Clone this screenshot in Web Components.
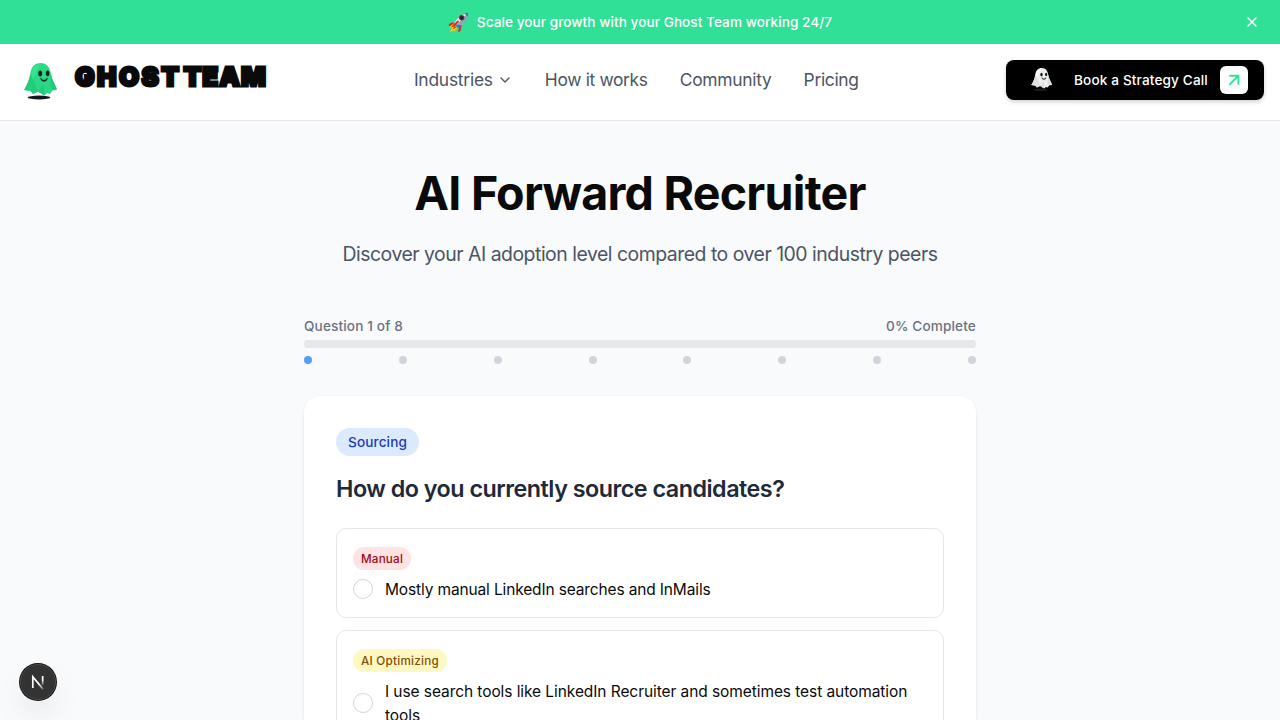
<!DOCTYPE html>
<html lang="en">
<head>
<meta charset="utf-8">
<title>AI Forward Recruiter</title>
<style>
body{margin:0;height:720px;overflow:hidden;background:#f9fafb;color:#0a0a0a;font-family:Inter,"Open Sans",sans-serif}
</style>
</head>
<body>
<ghost-app></ghost-app>
<script>
const define=(name,html)=>{
  const t=document.createElement('template');t.innerHTML=html;
  customElements.define(name,class extends HTMLElement{
    constructor(){super();this.attachShadow({mode:'open'}).append(t.content.cloneNode(true));}
  });
};

define('promo-banner',`<style>
:host{display:grid;grid-template-columns:1fr auto 1fr;align-items:center;height:44px;background:#30e097;color:#fff;font-size:13.6px;line-height:20px;font-weight:500;letter-spacing:.05px}
.msg{grid-column:2;display:flex;align-items:center;gap:8px}
.msg svg{display:block}
.close{justify-self:end;margin-right:20px;display:block}
</style>
<div class="msg"><svg width="21" height="21" viewBox="0 0 21 21">
<path d="M5 10 0.8 12.2 1 14 6 13Z" fill="#d92e18"/><path d="M11 15 10 20.5 12.5 19 14 12Z" fill="#d92e18"/>
<path d="M5 12 1 15.5 4.5 15.5 1.3 20.3 6 18 5.5 20 9.5 16Z" fill="#ffcf24"/><path d="M5.5 12 3 15 5.8 15 4.5 17.5 9 15.5Z" fill="#f04a16"/>
<path d="M6 11Q9 2.5 20 .7 20.6 9 10.5 16L7.5 15.2Z" fill="#8fa5b9"/>
<path d="M6.4 11Q10 4 19.5 1L9 12.5Z" fill="#e7edf4"/><path d="M16.5 1.5 20 .7 19.7 4.5Z" fill="#5a6883"/>
<path d="M6 11 10.5 16 13.8 13.2 9 13Z" fill="#3171b8"/>
<path d="M10.5 9 6 13.5" stroke="#d62d20" stroke-width="1.8"/><circle cx="13.7" cy="5.7" r="2.7" fill="#882b2b"/><circle cx="13.7" cy="5.7" r="1.7" fill="#17242f"/>
</svg><span>Scale your growth with your Ghost Team working 24/7</span></div>
<svg class="close" width="16" height="16" viewBox="0 0 24 24" fill="none" stroke="#fff" stroke-width="2.2" stroke-linecap="round"><path d="M18 6 6 18M6 6l12 12"/></svg>`);

define('ghost-mark',`<style>
:host{display:block;width:34px;height:38px}svg{display:block;width:100%;height:100%}
</style>
<svg viewBox="0 0 34 38">
<ellipse cx="15" cy="34.5" rx="11.4" ry="1.9" style="fill:var(--shadow,#101820)"/>
<path d="M16.5 0C23 0 26 4.5 27 11 28 18 32 22 32.8 27L28.5 27.2 26 31 23 30 20.5 32.5 14 28.5 9 31 6.5 28 .1 27C3 22 5.5 17 6.3 10.5 7.2 4 11 0 16.5 0Z" style="fill:var(--body,#2bd985)"/>
<path d="M6.3 10.5 9.5 17 5.5 27.7.1 27C3 22 5.5 17 6.3 10.5ZM9.5 17 14 28.5 9 31 6.5 28ZM27 11 26 23 28.5 27.2 32.8 27C32 22 28 18 27 11ZM20 21 20.5 32.5 14 28.5Z" style="fill:var(--fold,#22cb7a)"/>
<path d="M10 4 16 1 13 8 9 16 7 10Z" style="fill:var(--light,#3ae293)"/>
<ellipse cx="16.2" cy="10.4" rx="1.9" ry="3" fill="#10231e"/><ellipse cx="23.6" cy="10.3" rx="1.8" ry="2.9" fill="#10231e"/>
<path d="M16.5 15.2Q20 19.5 23.4 15.2 23 18.3 20 18.3 17.2 18.3 16.5 15.2Z" fill="#10231e" stroke="#10231e" stroke-width=".6"/>
</svg>`);

define('site-header',`<style>
:host{display:grid;grid-template-columns:1fr auto 1fr;align-items:start;height:60px;padding:16px 16px 0 24px;background:#fff;border-bottom:1px solid #e5e7eb}
.brand{display:flex;align-items:flex-start;gap:17px;padding-top:3px}
.word{display:flex;gap:2px;font-size:26px;line-height:27px;font-weight:900;-webkit-text-stroke:2.8px #0a0a0a;color:#0a0a0a}
.g{letter-spacing:2.4px}.t{letter-spacing:1px}
nav{display:flex;gap:32px;height:40px;align-items:center;font-size:17.4px;line-height:28px;color:#4b5563;margin-right:15.5px}
nav span{white-space:nowrap}
.ind{display:flex;align-items:center;gap:4px}
button{all:unset;justify-self:end;box-sizing:border-box;width:258px;height:40px;border-radius:8px;background:#000;color:#fff;display:flex;align-items:center;padding:0 16px 0 25px;box-shadow:0 2px 4px rgba(0,0,0,.18);font-size:13.6px;font-weight:500;letter-spacing:.14px;white-space:nowrap}
button ghost-mark{width:22px;height:24px;margin-right:21px;--body:#eee;--fold:#dedede;--light:#fafafa;--shadow:#13211e}
.arrow{margin-left:auto;width:28px;height:28px;border-radius:6px;background:#fff;display:grid;place-items:center}
</style>
<div class="brand"><ghost-mark></ghost-mark><div class="word"><span class="g">GHOST</span><span class="t">TEAM</span></div></div>
<nav><span class="ind"><span style="letter-spacing:-.22px">Industries</span><svg width="16" height="16" viewBox="0 0 24 24" fill="none" stroke="#4b5563" stroke-width="2" stroke-linecap="round" stroke-linejoin="round"><path d="m6 9 6 6 6-6"/></svg></span><span style="letter-spacing:-.33px">How it works</span><span style="letter-spacing:-.25px">Community</span><span style="letter-spacing:-.32px">Pricing</span></nav>
<button><ghost-mark></ghost-mark><span>Book a Strategy Call</span><span class="arrow"><svg width="16" height="16" viewBox="0 0 16 16" fill="none" stroke="#30e097" stroke-width="1.9"><path d="M3.3 3.7H12.4V12.7M12.2 3.9 3.3 12.8"/></svg></span></button>`);

define('page-title',`<style>
:host{display:block;text-align:center}
h1{margin:0 0 23px;font-size:46.6px;line-height:48px;font-weight:700;letter-spacing:-.77px}
p{margin:0;font-size:19.4px;line-height:28px;color:#4b5563;letter-spacing:-.475px}
</style><h1>AI Forward Recruiter</h1><p>Discover your AI adoption level compared to over 100 industry peers</p>`);

define('quiz-progress',`<style>
:host{display:block;font-size:13.6px;line-height:20px;font-weight:500;color:#6b7280;letter-spacing:.14px}
.row{display:flex;justify-content:space-between}
.bar{height:8px;border-radius:4px;background:#e5e7eb;margin:4px 0 8px}
i{width:8px;height:8px;border-radius:50%;background:#d1d5db}i:first-child{background:#51a2ff}
</style><div class="row"><span>Question 1 of 8</span><span>0% Complete</span></div><div class="bar"></div>
<div class="row"><i></i><i></i><i></i><i></i><i></i><i></i><i></i><i></i></div>`);

define('quiz-option',`<style>
:host{display:block;border:1px solid #e5e7eb;border-radius:10px;padding:18px 16px 15px;margin-bottom:12px}
.top{height:31px}
.tag{display:flex;width:fit-content;align-items:center;box-sizing:border-box;height:23px;line-height:22px;padding:1px 8px 0;border-radius:12px;font-size:11.7px;font-weight:500;background:var(--bg);color:var(--fg)}
.row{display:flex;align-items:center;gap:12px;font-size:15.5px;line-height:24px}
.radio{box-sizing:border-box;flex:none;width:20px;height:20px;border:1px solid #d1d5db;border-radius:50%;margin-bottom:2px}
</style><div class="top"><span class="tag"><slot name="tag"></slot></span></div><div class="row"><span class="radio"></span><span><slot></slot></span></div>`);

define('quiz-card',`<style>
:host{display:block;box-sizing:border-box;height:324px;background:#fff;border-radius:16px 16px 0 0;padding:32px 32px 0;box-shadow:0 1px 3px rgba(0,0,0,.1),0 1px 2px -1px rgba(0,0,0,.1)}
.cat{display:flex;width:fit-content;align-items:center;height:28px;padding:0 12px;border-radius:14px;background:#dbeafe;color:#193cb8;font-size:13.6px;font-weight:500;letter-spacing:.12px}
h2{margin:17px 0 23px;font-size:23.3px;line-height:32px;font-weight:600;color:#1e2939;letter-spacing:-.49px}
</style><div class="cat">Sourcing</div><h2>How do you currently source candidates?</h2>
<quiz-option style="--bg:#ffe2e2;--fg:#9f0712;letter-spacing:-.14px"><span slot="tag" style="letter-spacing:.18px">Manual</span>Mostly manual LinkedIn searches and InMails</quiz-option>
<quiz-option style="--bg:#fef9c2;--fg:#894b00;letter-spacing:-.075px"><span slot="tag" style="letter-spacing:.25px">AI Optimizing</span>I use search tools like LinkedIn Recruiter and sometimes test automation tools</quiz-option>`);

define('dev-badge',`<style>
:host{position:fixed;left:19px;top:663px;width:38px;height:38px;border-radius:50%;box-shadow:0 16px 32px -8px rgba(0,0,0,.18)}svg{display:block}
</style><svg width="38" height="38" viewBox="0 0 38 38"><defs><linearGradient id="r" x1="0" y1="0" x2="0" y2="1"><stop offset=".4" stop-color="#fff"/><stop offset="1" stop-color="#fff" stop-opacity="0"/></linearGradient><linearGradient id="d" x1="0" y1="0" x2="1" y2="1"><stop offset=".6" stop-color="#fff"/><stop offset="1" stop-color="#fff" stop-opacity=".2"/></linearGradient></defs>
<circle cx="19" cy="19" r="19" fill="#111"/><circle cx="19" cy="19" r="17.6" fill="#333" stroke="#505050" stroke-width=".9"/>
<path d="M13.8 25V13.8L24.3 26.4" fill="none" stroke="url(#d)" stroke-width="1.7"/><rect x="22.8" y="13" width="1.7" height="10" fill="url(#r)"/></svg>`);

define('ghost-app',`<style>
:host{display:block;height:720px;overflow:hidden}main{width:672px;margin:0 auto;padding-top:48px}
quiz-progress{margin:48px 0 32px}
</style><promo-banner></promo-banner><site-header></site-header><main><page-title></page-title><quiz-progress></quiz-progress><quiz-card></quiz-card></main><dev-badge></dev-badge>`);
</script>
</body>
</html>
